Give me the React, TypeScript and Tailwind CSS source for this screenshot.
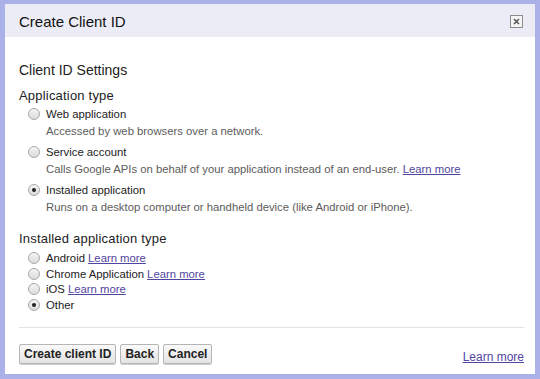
import React from "react";

function Radio({ checked }: { checked?: boolean }) {
  return (
    <span className="mt-[1px] flex h-[12px] w-[12px] shrink-0 items-center justify-center rounded-full border border-[#a8a8a8] bg-gradient-to-b from-[#f4f4f4] to-[#dcdcdc]">
      {checked && <span className="h-[4px] w-[4px] rounded-full bg-[#222]" />}
    </span>
  );
}

function Link({ children }: { children: React.ReactNode }) {
  return <span className="text-[#5046a0] underline">{children}</span>;
}

function Option({
  label,
  desc,
  checked,
}: {
  label: React.ReactNode;
  desc?: React.ReactNode;
  checked?: boolean;
}) {
  return (
    <div className="flex gap-[6px]">
      <Radio checked={checked} />
      <div className="flex flex-col">
        <span className="leading-[15px] text-[#222]">{label}</span>
        {desc && <span className="mt-[2px] leading-[15px] text-[#5c5c5c]">{desc}</span>}
      </div>
    </div>
  );
}

function Button({ children }: { children: React.ReactNode }) {
  return (
    <span className="flex h-[20px] items-center rounded-[2px] border border-[#b5b5b5] bg-gradient-to-b from-[#fafafa] to-[#e3e3e3] px-[4px] text-[12px] font-bold text-[#222] shadow-[0_1px_0_#d0d0d0]">
      {children}
    </span>
  );
}

export default function App() {
  return (
    <div
      className="h-[379px] w-[540px] bg-[#aab0e8] pb-[5px] pl-[5px] pr-[5px] pt-[4px]"
      style={{ fontFamily: '"Liberation Sans", Arial, sans-serif' }}
    >
      <div className="flex h-full flex-col bg-white">
        <div className="flex h-[33px] items-center justify-between bg-[#ececf6] pl-[14px] pr-[12px] pt-[4px]">
          <span className="text-[15px] text-[#111]">Create Client ID</span>
          <span className="mt-[-2px] flex h-[13px] w-[13px] items-center justify-center border border-[#8c8c8c] bg-[#f4f4f4]">
            <svg width="7" height="7" viewBox="0 0 7 7">
              <path d="M1 1L6 6M6 1L1 6" stroke="#555" strokeWidth="1.5" />
            </svg>
          </span>
        </div>
        <div className="flex flex-1 flex-col pl-[14px] pr-[11px] text-[11.3px]">
          <div className="mt-[25px] text-[14px] leading-[17px] text-[#222]">Client ID Settings</div>
          <div className="mt-[9px] text-[13px] leading-[16px] tracking-[0.2px] text-[#222]">Application type</div>
          <div className="mt-[3px] flex flex-col gap-[6px] pl-[9px]">
            <Option label="Web application" desc="Accessed by web browsers over a network." />
            <Option
              label="Service account"
              desc={
                <>
                  Calls Google APIs on behalf of your application instead of an end-user.{" "}
                  <Link>Learn more</Link>
                </>
              }
            />
            <Option
              checked
              label="Installed application"
              desc="Runs on a desktop computer or handheld device (like Android or iPhone)."
            />
          </div>
          <div className="mt-[16px] text-[13px] leading-[16px] tracking-[0.2px] text-[#222]">
            Installed application type
          </div>
          <div className="mt-[4px] flex flex-col gap-[0.5px] pl-[9px]">
            <Option label={<>Android <Link>Learn more</Link></>} />
            <Option label={<>Chrome Application <Link>Learn more</Link></>} />
            <Option label={<>iOS <Link>Learn more</Link></>} />
            <Option checked label="Other" />
          </div>
          <div className="mt-[14px] h-px bg-[#e2e2e2]" />
          <div className="mt-[14px] flex items-center justify-between">
            <div className="flex gap-[4px]">
              <Button>Create client ID</Button>
              <Button>Back</Button>
              <Button>Cancel</Button>
            </div>
            <span className="mt-[6px] text-[12px]">
              <Link>Learn more</Link>
            </span>
          </div>
        </div>
      </div>
    </div>
  );
}
